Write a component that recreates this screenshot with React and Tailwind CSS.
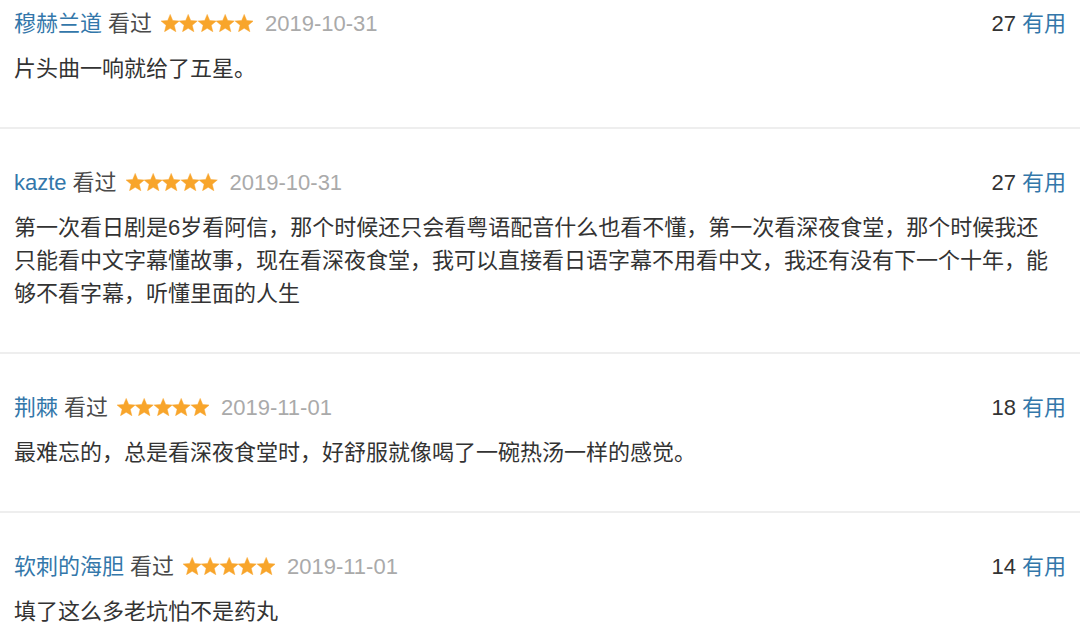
import React from 'react'

const reviews = [
  { user: '穆赫兰道', date: '2019-10-31', votes: 27, text: '片头曲一响就给了五星。' },
  {
    user: 'kazte',
    date: '2019-10-31',
    votes: 27,
    text: '第一次看日剧是6岁看阿信，那个时候还只会看粤语配音什么也看不懂，第一次看深夜食堂，那个时候我还只能看中文字幕懂故事，现在看深夜食堂，我可以直接看日语字幕不用看中文，我还有没有下一个十年，能够不看字幕，听懂里面的人生',
  },
  { user: '荆棘', date: '2019-11-01', votes: 18, text: '最难忘的，总是看深夜食堂时，好舒服就像喝了一碗热汤一样的感觉。' },
  { user: '软刺的海胆', date: '2019-11-01', votes: 14, text: '填了这么多老坑怕不是药丸' },
]

function Star(){
  return (
    <svg width="18.4" height="18.4" viewBox="0 0 24 24" className="shrink-0">
      <path
        d="M12 .5L15.3 8.5 23.9 9.1 17.3 14.7 19.4 23.1 12 18.6 4.6 23.1 6.7 14.7 .1 9.1 8.7 8.5z"
        fill="#f8a52b"
        stroke="#f8a52b"
        strokeWidth="0.6"
        strokeLinejoin="round"
      />
    </svg>
  )
}

function Review({ r, first }){
  return (
    <div className={`${first ? 'pt-[1px]' : 'pt-[31px] border-t-2 border-[#eeeeee]'} pb-[42px]`}>
      <div className="flex items-center justify-between h-[44px] px-[14px]">
        <div className="flex items-center whitespace-nowrap">
          <span className="text-[#3377aa]">{r.user}</span>
          <span className="ml-[6px] text-[#4a4a4a]">看过</span>
          <span className="ml-[9px] flex items-center">
            <Star /><Star /><Star /><Star /><Star />
          </span>
          <span className="ml-[12px] text-[#aaaaaa]">{r.date}</span>
        </div>
        <div className="whitespace-nowrap">
          <span className="text-[#333333]">{r.votes}</span>
          <span className="ml-[6px] text-[#3377aa]">有用</span>
        </div>
      </div>
      <p className="mt-[7px] pl-[14px] w-[1054px] leading-[33px] text-[#333333]">{r.text}</p>
    </div>
  )
}

export default function App(){
  return (
    <div
      className="w-[1080px] h-[636px] overflow-hidden bg-white text-[22px]"
      style={{ fontFamily: '"Liberation Sans", "Noto Sans CJK SC", sans-serif' }}
    >
      {reviews.map((r, i) => (
        <Review key={i} r={r} first={i === 0} />
      ))}
    </div>
  )
}
